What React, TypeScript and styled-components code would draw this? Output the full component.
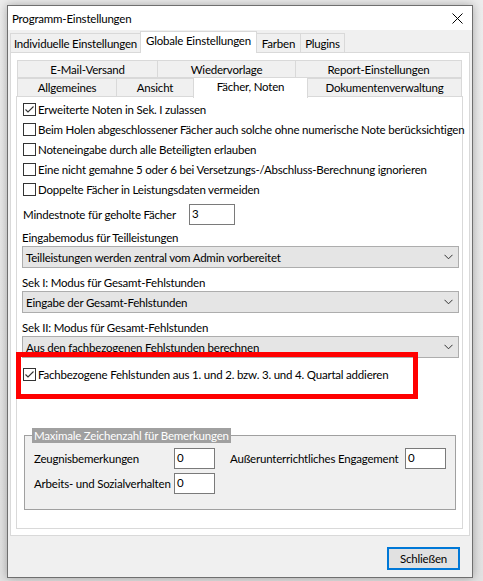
import React from "react";
import styled, { createGlobalStyle } from "styled-components";

const Global = createGlobalStyle`
  html, body { margin: 0; padding: 0; background: #e6e6e6; }
  body { font-family: Lato, "Noto Sans", sans-serif; font-size: 11.5px; letter-spacing: -0.2px; color: #000; }
  #root { width: 483px; height: 581px; overflow: hidden; }
  * { box-sizing: border-box; }
`;

const Screen = styled.div`
  width: 483px;
  height: 581px;
  padding: 5px 0 0 7px;
  background: linear-gradient(#ededed, #e2e2e2);
`;

const Window = styled.div`
  width: 466px;
  height: 573px;
  border: 1px solid #6f6f6f;
  background: #f0f0f0;
  box-shadow: 0 0 9px rgba(0, 0, 0, 0.3);
  display: flex;
  flex-direction: column;
`;

const TitleBar = styled.div`
  height: 24px;
  flex: none;
  background: #fff;
  display: flex;
  align-items: center;
  justify-content: space-between;
  padding: 0 9px 0 4px;
`;

const Body = styled.div`
  flex: 1;
  display: flex;
  flex-direction: column;
  padding: 0 2px;
`;

const TabStrip = styled.div<{ $h: number }>`
  display: flex;
  align-items: flex-end;
  height: ${(p) => p.$h}px;
  flex: none;
`;

const OuterTab = styled.div<{ $w: number; $active?: boolean }>`
  width: ${(p) => p.$w}px;
  height: ${(p) => (p.$active ? 22 : 19)}px;
  margin-left: -1px;
  border: 1px solid #d9d9d9;
  border-bottom: none;
  background: ${(p) => (p.$active ? "#fff" : "#f0f0f0")};
  display: flex;
  justify-content: center;
  align-items: ${(p) => (p.$active ? "flex-start" : "center")};
  padding-top: ${(p) => (p.$active ? 2 : 0)}px;
  white-space: nowrap;
  position: relative;
  z-index: ${(p) => (p.$active ? 2 : 1)};
  margin-bottom: ${(p) => (p.$active ? -1 : 0)}px;
  &:first-child { margin-left: 0; }
`;

const OuterPage = styled.div`
  height: 484px;
  flex: none;
  background: #fff;
  border: 1px solid #d9d9d9;
  padding: 8px 6px 6px 5px;
  display: flex;
  flex-direction: column;
`;

const InnerTab = styled.div<{ $w: number; $active?: boolean; $h: number }>`
  width: ${(p) => p.$w}px;
  height: ${(p) => p.$h}px;
  margin-left: -1px;
  border: 1px solid #d9d9d9;
  border-bottom: ${(p) => (p.$active ? "none" : "1px solid #d9d9d9")};
  background: ${(p) => (p.$active ? "#fff" : "#f0f0f0")};
  display: flex;
  justify-content: center;
  align-items: ${(p) => (p.$active ? "flex-start" : "center")};
  padding-top: ${(p) => (p.$active ? 2 : 0)}px;
  white-space: nowrap;
  position: relative;
  z-index: ${(p) => (p.$active ? 2 : 1)};
  margin-bottom: ${(p) => (p.$active ? -1 : 0)}px;
  &:first-child { margin-left: 1px; }
`;

const InnerPage = styled.div`
  height: 433px;
  flex: none;
  margin-top: -1px;
  background: #fff;
  border: 1px solid #d9d9d9;
  display: flex;
  flex-direction: column;
`;

const CheckList = styled.div`
  padding-top: 2px;
  display: flex;
  flex-direction: column;
`;

const CheckRow = styled.label`
  height: 20px;
  display: flex;
  align-items: center;
  padding-left: 6px;
  white-space: nowrap;
  position: relative;
`;

const Box = styled.span`
  width: 13px;
  height: 13px;
  border: 1px solid #333;
  background: #fff;
  flex: none;
  margin-right: 2px;
  display: flex;
  align-items: center;
  justify-content: center;
`;

const FieldRow = styled.div`
  margin-top: 5px;
  height: 21px;
  display: flex;
  align-items: center;
  padding-left: 6px;
`;

const FieldLabel = styled.span<{ $w: number }>`
  width: ${(p) => p.$w}px;
  flex: none;
  white-space: nowrap;
`;

const Input = styled.div<{ $w: number }>`
  width: ${(p) => p.$w}px;
  height: 21px;
  flex: none;
  border: 1px solid #7a7a7a;
  background: #fff;
  padding: 1px 0 0 2px;
  line-height: 16px;
`;

const SectionLabel = styled.div<{ $top: number }>`
  margin-top: ${(p) => p.$top}px;
  height: 18px;
  display: flex;
  align-items: center;
  padding-left: 5px;
  white-space: nowrap;
`;

const Select = styled.div`
  margin-left: 5px;
  width: 437px;
  height: 22px;
  border: 1px solid #adadad;
  background: #e5e5e5;
  display: flex;
  align-items: center;
  justify-content: space-between;
  padding: 0 5px 0 3px;
  white-space: nowrap;
`;

const HighlightRow = styled(CheckRow)`
  margin-top: 6px;
`;

const RedFrame = styled.span`
  position: absolute;
  top: -12px;
  left: -1px;
  width: 402px;
  height: 47px;
  border: 5px solid #ff0000;
  pointer-events: none;
`;

const Group = styled.fieldset`
  margin: 44px 0 0 7px;
  width: 432px;
  border: 1px solid #a0a0a0;
  background: #f0f0f0;
  padding: 5px 0 15px 9px;
  min-width: 0;
  display: grid;
  grid-template-columns: 140px 41px 15px 175px 41px;
  grid-auto-rows: 21px;
  row-gap: 4px;
  align-items: center;
`;

const Legend = styled.legend`
  margin-left: -2px;
  padding: 0 2px;
  height: 15px;
  line-height: 15px;
  background: #a0a0a0;
  color: #fff;
  white-space: nowrap;
`;

const GroupLabel = styled.span<{ $col: number }>`
  grid-column: ${(p) => p.$col};
  white-space: nowrap;
`;

const GroupInput = styled(Input)<{ $col: number }>`
  grid-column: ${(p) => p.$col};
`;

const Footer = styled.div`
  flex: 1;
  display: flex;
  justify-content: flex-end;
  align-items: flex-start;
  padding: 11px 10px 0 0;
`;

const Button = styled.div`
  width: 73px;
  height: 23px;
  border: 2px solid #0078d7;
  background: #e1e1e1;
  display: flex;
  align-items: center;
  justify-content: center;
`;

const Check = () => (
  <svg width="11" height="11" viewBox="0 0 11 11">
    <polyline points="1.5,5.5 4,8 9.5,2.5" fill="none" stroke="#333" strokeWidth="1.1" />
  </svg>
);

const Chevron = () => (
  <svg width="9" height="6" viewBox="0 0 9 6">
    <polyline points="0.5,0.8 4.5,4.8 8.5,0.8" fill="none" stroke="#333" strokeWidth="1" />
  </svg>
);

const CloseX = () => (
  <svg width="11" height="11" viewBox="0 0 11 11">
    <path d="M0.5 0.5 L10.5 10.5 M10.5 0.5 L0.5 10.5" stroke="#000" strokeWidth="1" />
  </svg>
);

const checks: { text: string; on: boolean }[] = [
  { text: "Erweiterte Noten in Sek. I zulassen", on: true },
  { text: "Beim Holen abgeschlossener Fächer auch solche ohne numerische Note  berücksichtigen", on: false },
  { text: "Noteneingabe durch alle Beteiligten erlauben", on: false },
  { text: "Eine nicht gemahne 5 oder 6 bei Versetzungs-/Abschluss-Berechnung ignorieren", on: false },
  { text: "Doppelte Fächer in Leistungsdaten vermeiden", on: false },
];

export default function App() {
  return (
    <>
      <Global />
      <Screen>
        <Window>
          <TitleBar>
            <span>Programm-Einstellungen</span>
            <CloseX />
          </TitleBar>
          <Body>
            <TabStrip $h={22}>
              <OuterTab $w={131}>Individuelle Einstellungen</OuterTab>
              <OuterTab $w={117} $active>Globale Einstellungen</OuterTab>
              <OuterTab $w={45}>Farben</OuterTab>
              <OuterTab $w={45}>Plugins</OuterTab>
            </TabStrip>
            <OuterPage>
              <TabStrip $h={17}>
                <InnerTab $w={141} $h={18}>E-Mail-Versand</InnerTab>
                <InnerTab $w={139} $h={18}>Wiedervorlage</InnerTab>
                <InnerTab $w={167} $h={18}>Report-Einstellungen</InnerTab>
              </TabStrip>
              <TabStrip $h={19}>
                <InnerTab $w={100} $h={19}>Allgemeines</InnerTab>
                <InnerTab $w={78} $h={19}>Ansicht</InnerTab>
                <InnerTab $w={115} $h={21} $active>Fächer, Noten</InnerTab>
                <InnerTab $w={155} $h={19}>Dokumentenverwaltung</InnerTab>
              </TabStrip>
              <InnerPage>
                <CheckList>
                  {checks.map((c) => (
                    <CheckRow key={c.text}>
                      <Box>{c.on && <Check />}</Box>
                      {c.text}
                    </CheckRow>
                  ))}
                </CheckList>
                <FieldRow>
                  <FieldLabel $w={166}>Mindestnote für geholte Fächer</FieldLabel>
                  <Input $w={46}>3</Input>
                </FieldRow>
                <SectionLabel $top={3}>Eingabemodus für Teilleistungen</SectionLabel>
                <Select>
                  <span>Teilleistungen werden zentral vom Admin vorbereitet</span>
                  <Chevron />
                </Select>
                <SectionLabel $top={5}>Sek I: Modus für Gesamt-Fehlstunden</SectionLabel>
                <Select>
                  <span>Eingabe der Gesamt-Fehlstunden</span>
                  <Chevron />
                </Select>
                <SectionLabel $top={5}>Sek II: Modus für Gesamt-Fehlstunden</SectionLabel>
                <Select>
                  <span>Aus den fachbezogenen Fehlstunden berechnen</span>
                  <Chevron />
                </Select>
                <HighlightRow>
                  <Box>
                    <Check />
                  </Box>
                  Fachbezogene Fehlstunden aus 1. und 2. bzw. 3. und 4. Quartal addieren
                  <RedFrame />
                </HighlightRow>
                <Group>
                  <Legend>Maximale Zeichenzahl für Bemerkungen</Legend>
                  <GroupLabel $col={1}>Zeugnisbemerkungen</GroupLabel>
                  <GroupInput $col={2} $w={41}>0</GroupInput>
                  <GroupLabel $col={4}>Außerunterrichtliches Engagement</GroupLabel>
                  <GroupInput $col={5} $w={41}>0</GroupInput>
                  <GroupLabel $col={1}>Arbeits- und Sozialverhalten</GroupLabel>
                  <GroupInput $col={2} $w={41}>0</GroupInput>
                </Group>
              </InnerPage>
            </OuterPage>
            <Footer>
              <Button>Schließen</Button>
            </Footer>
          </Body>
        </Window>
      </Screen>
    </>
  );
}
